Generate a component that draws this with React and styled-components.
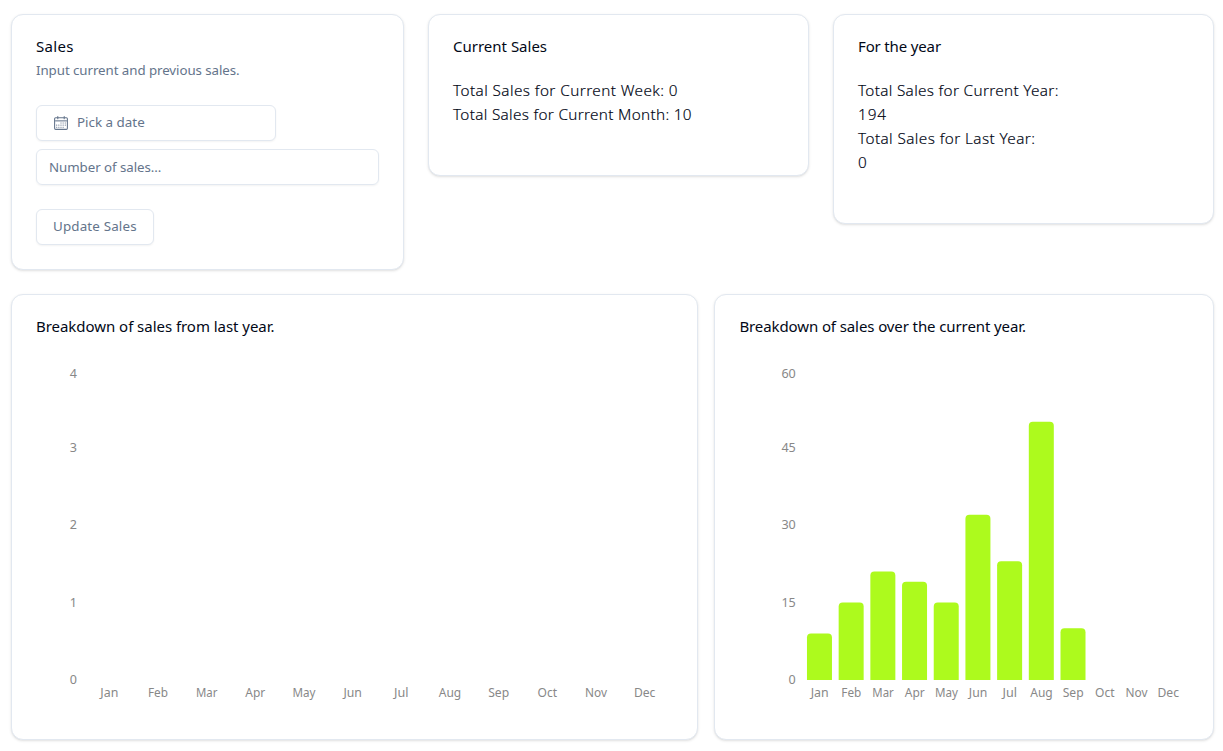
import React from 'react';
import styled, { createGlobalStyle } from 'styled-components';

const GlobalStyle = createGlobalStyle`
  *, *::before, *::after { box-sizing: border-box; }
  body {
    margin: 0;
    background: #fff;
    color: #020817;
    font-family: "Noto Sans", "Open Sans", sans-serif;
  }
`;

const Page = styled.main`
  display: flex;
  flex-direction: column;
  gap: 24px;
  padding: 14px 9px 10px 11px;
`;

const SummaryRow = styled.section`
  display: grid;
  grid-template-columns: 393px 381px 381px;
  gap: 24px;
  align-items: start;
`;

const ChartRow = styled.section`
  display: grid;
  grid-template-columns: 687.4px 499.6px;
  gap: 16px;
`;

const Card = styled.article`
  border: 1px solid #e2e8f0;
  border-radius: 12px;
  background: #fff;
  box-shadow: 0 1px 3px 0 rgba(0, 0, 0, 0.1), 0 1px 2px -1px rgba(0, 0, 0, 0.1);
  padding: 23px 24px 24px;
`;

const StatCard = styled(Card)`
  padding-bottom: 49px;
`;

const ChartCard = styled(Card)`
  height: 446px;
`;

const Title = styled.h3`
  margin: 0;
  font-size: 15px;
  font-weight: 400;
  line-height: 16px;
  letter-spacing: ${(p) => p.$tracking || '-0.08px'};
  white-space: nowrap;
`;

const Description = styled.p`
  margin: 6px 0 25px;
  font-size: 13.3px;
  line-height: 20px;
  letter-spacing: -0.06px;
  color: #64748b;
`;

const StatList = styled.div`
  margin-top: 24px;
  color: #000514;
  font-size: 15.3px;
  font-weight: 300;
  line-height: 24px;
`;

const Stat = styled.div`
  letter-spacing: ${(p) => p.$tracking || '0.25px'};
  white-space: nowrap;
  -webkit-text-stroke: 0.15px currentColor;
`;

const Form = styled.form`
  display: flex;
  flex-direction: column;
  align-items: flex-start;
`;

const Button = styled.button`
  display: inline-flex;
  align-items: center;
  width: ${(p) => p.$width};
  height: 36px;
  padding: 0 16px 2px;
  border: 1px solid #e2e8f0;
  border-radius: 6px;
  background: #fff;
  box-shadow: 0 1px 2px 0 rgba(0, 0, 0, 0.05);
  color: #64748b;
  font: 400 13.4px/20px "Noto Sans", sans-serif;
  letter-spacing: ${(p) => p.$tracking || '0'};
  white-space: nowrap;

  svg {
    width: 16px;
    height: 16px;
    margin: 2px 8px 0 0;
    flex: none;
  }
`;

const Input = styled.input`
  width: 343px;
  height: 36px;
  margin: 8px 0 24px;
  padding: 4px 12px;
  border: 1px solid #e2e8f0;
  border-radius: 6px;
  background: transparent;
  box-shadow: 0 1px 2px 0 rgba(0, 0, 0, 0.05);
  font: 400 13.3px/20px "Noto Sans", sans-serif;
  letter-spacing: -0.05px;

  &::placeholder { color: #64748b; opacity: 1; }
`;

const Plot = styled.svg`
  display: block;
  margin-top: 25px;
  overflow: visible;
`;

const AxisText = styled.text`
  fill: #888;
  font-size: 12px;
`;

const Bar = styled.path`
  fill: #adfa1d;
`;

const DAYS = [
  [7, 7], [9, 7], [11, 7],
  [3, 9], [5, 9], [7, 9], [9, 9], [11, 9],
  [3, 11], [5, 11], [7, 11], [9, 11],
];

function CalendarIcon() {
  return (
    <svg viewBox="0 0 15 15" fill="none">
      <rect x="1.5" y="2.5" width="12" height="11" rx="1" stroke="currentColor" />
      <path d="M4.5 1.5V3.5M10.5 1.5V3.5" stroke="currentColor" strokeLinecap="round" />
      <path d="M2 5.5H13" stroke="currentColor" />
      {DAYS.map(([x, y]) => (
        <rect key={`${x}-${y}`} x={x} y={y} width="1" height="1" rx="0.3" fill="currentColor" />
      ))}
    </svg>
  );
}

const MONTHS = ['Jan', 'Feb', 'Mar', 'Apr', 'May', 'Jun', 'Jul', 'Aug', 'Sep', 'Oct', 'Nov', 'Dec'];
const MONTH_WIDTHS = [18, 20, 21.5, 20, 23, 18.5, 14.5, 22.5, 21, 19.5, 22, 21.5];

const BASE = 321;
const PLOT_HEIGHT = 310;

function barPath(x, y, w, r = 4) {
  return `M${x},${BASE} V${y + r} A${r},${r} 0 0 1 ${x + r},${y} H${x + w - r} A${r},${r} 0 0 1 ${x + w},${y + r} V${BASE} Z`;
}

function BarChart({ width, start, plotWidth, ticks, values }) {
  const band = plotWidth / MONTHS.length;
  const max = ticks[ticks.length - 1];
  return (
    <Plot width={width} height="355">
      {ticks.map((tick) => (
        <AxisText
          key={tick}
          x={start - 8}
          y={Math.max(BASE - (tick / max) * PLOT_HEIGHT, 14.5) + 4}
          textAnchor="end"
          textLength={String(tick).length * 7.2}
          lengthAdjust="spacingAndGlyphs"
        >
          {tick}
        </AxisText>
      ))}
      {MONTHS.map((month, i) => (
        <AxisText
          key={month}
          x={start + band * (i + 0.5)}
          y="338"
          textAnchor="middle"
          textLength={MONTH_WIDTHS[i]}
          lengthAdjust="spacingAndGlyphs"
        >
          {month}
        </AxisText>
      ))}
      {values.map((value, i) => (
        <Bar
          key={MONTHS[i]}
          d={barPath(start + band * (i + 0.1), BASE - (value / max) * PLOT_HEIGHT, 25)}
        />
      ))}
    </Plot>
  );
}

export default function App() {
  return (
    <>
      <GlobalStyle />
      <Page>
        <SummaryRow>
          <Card>
            <Title $tracking="0.3px">Sales</Title>
            <Description>Input current and previous sales.</Description>
            <Form>
              <Button type="button" $width="240px">
                <CalendarIcon />
                Pick a date
              </Button>
              <Input placeholder="Number of sales..." />
              <Button type="button" $width="118px" $tracking="0.15px">Update Sales</Button>
            </Form>
          </Card>
          <StatCard>
            <Title $tracking="0px">Current Sales</Title>
            <StatList>
              <Stat $tracking="0.42px">Total Sales for Current Week: 0</Stat>
              <Stat $tracking="0.31px">Total Sales for Current Month: 10</Stat>
            </StatList>
          </StatCard>
          <StatCard>
            <Title $tracking="-0.15px">For the year</Title>
            <StatList>
              <Stat $tracking="0.32px">Total Sales for Current Year:</Stat>
              <Stat $tracking="0.9px">194</Stat>
              <Stat $tracking="0.41px">Total Sales for Last Year:</Stat>
              <Stat>0</Stat>
            </StatList>
          </StatCard>
        </SummaryRow>
        <ChartRow>
          <ChartCard>
            <Title $tracking="-0.04px">Breakdown of sales from last year.</Title>
            <BarChart width={637} start={49} plotWidth={584} ticks={[0, 1, 2, 3, 4]} values={[]} />
          </ChartCard>
          <ChartCard>
            <Title $tracking="-0.1px">Breakdown of sales over the current year.</Title>
            <BarChart
              width={449}
              start={64.8}
              plotWidth={380.3}
              ticks={[0, 15, 30, 45, 60]}
              values={[9, 15, 21, 19, 15, 32, 23, 50, 10]}
            />
          </ChartCard>
        </ChartRow>
      </Page>
    </>
  );
}
